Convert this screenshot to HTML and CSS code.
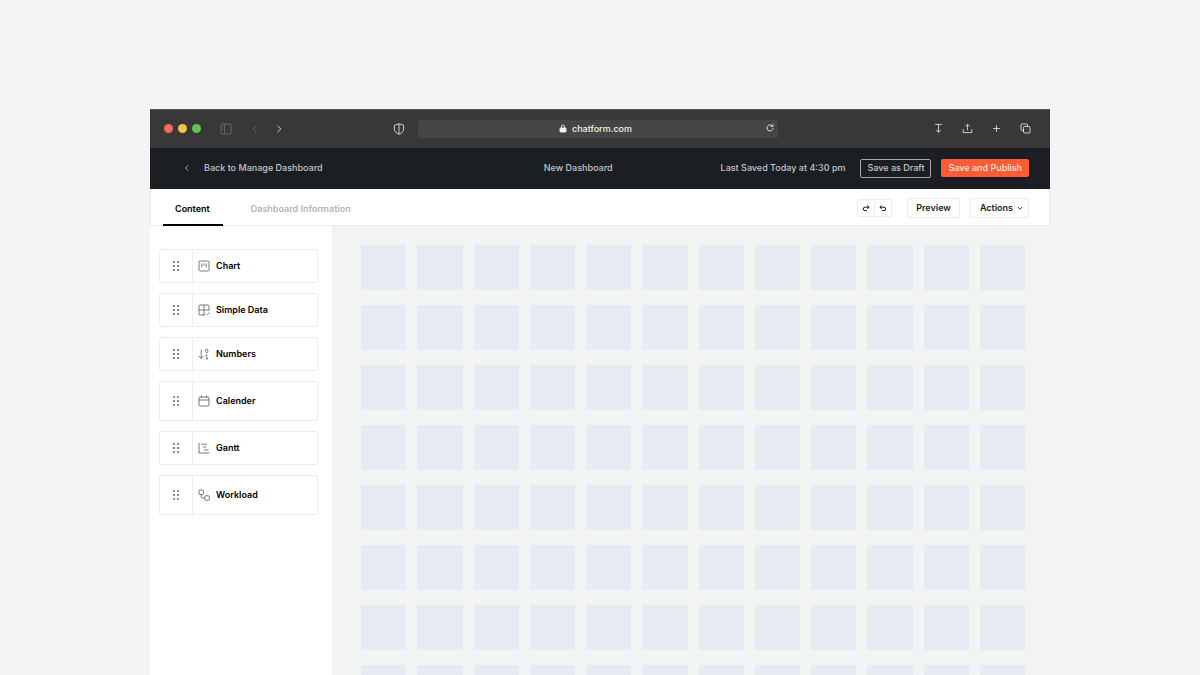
FILE: index.html
```html
<!DOCTYPE html>
<html lang="en">
<head>
  <meta charset="UTF-8" />
  <meta name="viewport" content="width=device-width, initial-scale=1.0" />
  <title>New Dashboard</title>
  <link rel="stylesheet" href="styles.css">
</head>
<body>
  <div class="window">
    <!-- Browser toolbar -->
    <div class="browser-bar">
      <div class="browser-left">
        <div class="lights">
          <span class="light red"></span>
          <span class="light yellow"></span>
          <span class="light green"></span>
        </div>
        <button class="icon-btn dim side-btn" aria-label="Toggle sidebar">
          <svg width="12" height="12" viewBox="0 0 12 12"><rect x="1" y="1" width="10" height="10" rx="1"/><path d="M4.5 1v10M2.4 3.2h.8M2.4 5h.8M2.4 6.8h.8"/></svg>
        </button>
        <button class="icon-btn dim back-btn" aria-label="Back">
          <svg width="10" height="10" viewBox="0 0 10 10"><path d="M6.4 1.8L3.4 5l3 3.2"/></svg>
        </button>
        <button class="icon-btn forward-btn" aria-label="Forward">
          <svg width="10" height="10" viewBox="0 0 10 10"><path d="M3.4 1.6L6.8 5 3.4 8.4"/></svg>
        </button>
        <button class="icon-btn shield-btn" aria-label="Privacy report">
          <svg width="12" height="12" viewBox="0 0 12 12"><path d="M6 .8L10.6 2.2V6c0 2.6-2 4.300-4.600 5.300C3.400 10.300 1.400 8.600 1.400 6V2.200zM6 1v10"/></svg>
        </button>
      </div>
      <div class="address">
        <svg class="lock" width="8" height="9" viewBox="0 0 8 9"><rect x="1" y="4" width="6" height="4" rx=".6"/><path d="M2.400 4V2.800a1.600 1.600 0 0 1 3.200 0V4"/></svg>
        <span>chatform.com</span>
        <button class="icon-btn reload" aria-label="Reload">
          <svg width="10" height="10" viewBox="0 0 10 10"><path d="M8 5.200A3 3 0 1 1 7.300 3M8 1.300V3.400H5.900"/></svg>
        </button>
      </div>
      <div class="browser-right">
        <button class="icon-btn" aria-label="Downloads">
          <svg width="11" height="11" viewBox="0 0 11 11"><path d="M2.200 1.400h6.600M5.500 1.400v7.800M3.200 7l2.300 2.300L7.800 7"/></svg>
        </button>
        <button class="icon-btn" aria-label="Share">
          <svg width="11" height="11" viewBox="0 0 11 11"><path d="M1.200 6.200v3.400h8.600V6.200M5.500 7.300V1.500M3.400 3.400l2.100-2.100 2.100 2.100"/></svg>
        </button>
        <button class="icon-btn" aria-label="New tab">
          <svg width="11" height="11" viewBox="0 0 11 11"><path d="M5.500 2.200v6.600M2.200 5.500h6.600"/></svg>
        </button>
        <button class="icon-btn" aria-label="Show all tabs">
          <svg width="11" height="11" viewBox="0 0 11 11"><rect x="3.500" y="3.500" width="6.500" height="6.500" rx="1"/><path d="M3.500 7.500H2a1 1 0 0 1-1-1V2a1 1 0 0 1 1-1h4.500a1 1 0 0 1 1 1v1.500"/></svg>
        </button>
      </div>
    </div>

    <!-- App header -->
    <header class="app-header">
      <a class="back-link" href="#">
        <svg width="8" height="8" viewBox="0 0 8 8"><path d="M5 1.400L2.600 4 5 6.600"/></svg>
        Back to Manage Dashboard
      </a>
      <h1 class="title">New Dashboard</h1>
      <span class="saved">Last Saved Today at 4:30 pm</span>
      <button class="btn btn-outline">Save as Draft</button>
      <button class="btn btn-primary">Save and Publish</button>
    </header>

    <!-- Tabs and actions -->
    <div class="tab-bar">
      <nav class="tabs">
        <a class="tab active" href="#">Content</a>
        <a class="tab" href="#">Dashboard Information</a>
      </nav>
      <div class="history">
        <button aria-label="Redo">
          <svg width="8" height="8" viewBox="0 0 8 8"><path d="M7 3.200H3a1.700 1.700 0 0 0 0 3.400h2M5.300 1.400L7 3.200 5.300 5"/></svg>
        </button>
        <button aria-label="Undo">
          <svg width="8" height="8" viewBox="0 0 8 8"><path d="M1 3.200h4a1.700 1.700 0 0 1 0 3.400H3M2.700 1.400L1 3.200 2.700 5"/></svg>
        </button>
      </div>
      <button class="btn btn-light">Preview</button>
      <button class="btn btn-light">Actions
        <svg width="6" height="6" viewBox="0 0 6 6"><path d="M.8 2L3 4.200 5.200 2"/></svg>
      </button>
    </div>

    <div class="workspace">
      <aside class="sidebar">
        <div class="widget">
          <span class="handle"></span>
          <svg width="12" height="12" viewBox="0 0 12 12"><rect x="1" y="1" width="10" height="10" rx="1.200"/><path d="M3.800 3.500v3.500M6 3.500v2M8.200 3.500v4"/></svg>
          Chart
        </div>
        <div class="widget">
          <span class="handle"></span>
          <svg width="12" height="12" viewBox="0 0 12 12"><path d="M11 6.500V2a1 1 0 0 0-1-1H2a1 1 0 0 0-1 1v8a1 1 0 0 0 1 1h5M1 6h10M6 1v10M8.300 9.700l1 1 2.200-2.200"/></svg>
          Simple Data
        </div>
        <div class="widget">
          <span class="handle"></span>
          <svg width="12" height="12" viewBox="0 0 12 12"><path d="M3.200 1.500v9M.8 8l2.400 2.500L5.600 8M7.600 7.600l1.200-.8v4M7.600 10.900h2.400"/><rect x="7.600" y="1.200" width="2.200" height="3.400" rx="1"/></svg>
          Numbers
        </div>
        <div class="widget tall">
          <span class="handle"></span>
          <svg width="12" height="12" viewBox="0 0 12 12"><rect x="1" y="2" width="10" height="9" rx="1"/><path d="M1 5h10M3.500.5v2.500M8.500.5v2.500"/></svg>
          Calender
        </div>
        <div class="widget">
          <span class="handle"></span>
          <svg width="12" height="12" viewBox="0 0 12 12"><path d="M1 .8v10.200h10.500M3.500 2.200h5.500M5 5h3.200M6 8h4.500"/></svg>
          Gantt
        </div>
        <div class="widget tall">
          <span class="handle"></span>
          <svg width="12" height="12" viewBox="0 0 12 12"><rect x="1" y="1" width="4.500" height="4.500" rx="1"/><rect x="6.800" y="6.800" width="4.500" height="4.500" rx="1"/><path d="M3.300 5.500V8a1 1 0 0 0 1 1h2.500"/></svg>
          Workload
        </div>
      </aside>
      <main class="canvas" id="canvas"></main>
    </div>
  </div>

  <script>
    // Fill the drop area with empty cells, 12 per row
    const canvas = document.getElementById("canvas");
    const rows = 8;
    for (let i = 0; i < rows * 12; i++) {
      const cell = document.createElement("div");
      cell.className = "cell";
      canvas.appendChild(cell);
    }
  </script>
</body>
</html>
```
FILE: styles.css
```css
:root {
  --page-bg: #f4f4f4;
  --bar-bg: #383839;
  --header-bg: #1b1e23;
  --header-text: #c4c5c7;
  --accent: #ff5c35;
  --line: #ececec;
  --canvas-bg: #f2f4f4;
  --cell-bg: #e6ebf3;
  --icon: #666874;
}

* {
  margin: 0;
  padding: 0;
  box-sizing: border-box;
}

body {
  height: 100vh;
  overflow: hidden;
  background: var(--page-bg);
  font-family: Inter, "Liberation Sans", sans-serif;
  font-size: 9px;
  font-weight: 600;
  line-height: 12px;
}

button {
  font: inherit;
  color: inherit;
  background: none;
  border: none;
  cursor: pointer;
}

a {
  color: inherit;
  text-decoration: none;
}

svg {
  display: block;
  flex: none;
  fill: none;
  stroke: currentColor;
  stroke-width: 0.9;
}

.window {
  display: flex;
  flex-direction: column;
  width: 75%;
  height: 100%;
  margin: 0 auto;
  padding-top: 109px;
}

/* Browser toolbar */
.browser-bar {
  display: grid;
  grid-template-columns: 268fr 360fr 272fr;
  align-items: center;
  height: 39px;
  flex: none;
  padding-bottom: 1px;
  background: var(--bar-bg);
  border-top: 1px solid #555;
  color: #dcdcdc;
}

.browser-left,
.browser-right,
.lights {
  display: flex;
  align-items: center;
}

.browser-left {
  padding: 0 13px 0 14px;
}

.lights {
  gap: 5px;
}

.light {
  width: 9px;
  height: 9px;
  border-radius: 50%;
}

.red { background: #ed6a5f; }
.yellow { background: #f5bf4f; }
.green { background: #61c454; }

.dim { color: #6c6c6d; }
.side-btn { margin-left: 19px; }
.back-btn { margin-left: 18px; }
.forward-btn { margin-left: 14px; }
.shield-btn { margin-left: auto; }

.address {
  display: flex;
  align-items: center;
  justify-content: center;
  gap: 5px;
  position: relative;
  height: 18px;
  padding-right: 5px;
  border-radius: 2px;
  background: #454546;
  color: #f2f2f2;
  font-weight: 500;
}

.lock rect {
  fill: currentColor;
}

.reload {
  position: absolute;
  right: 3px;
  top: 3px;
}

.browser-right {
  justify-content: flex-end;
  gap: 18px;
  padding-right: 19px;
}

/* App header */
.app-header {
  display: flex;
  align-items: center;
  height: 41px;
  flex: none;
  padding: 0 21px 1px 33px;
  background: var(--header-bg);
  color: var(--header-text);
  font-weight: 500;
}

.back-link {
  display: flex;
  align-items: center;
  gap: 13px;
}

.title {
  margin: 0 108px 0 auto;
  font-size: inherit;
  font-weight: inherit;
}

.saved {
  margin-right: 15px;
}

.btn {
  display: flex;
  align-items: center;
  justify-content: center;
  gap: 4px;
  border-radius: 2px;
  white-space: nowrap;
}

.btn-outline {
  height: 19px;
  margin-right: 10px;
  padding: 0 6px;
  border: 1px solid #a5a6a8;
}

.btn-primary {
  height: 18px;
  padding: 0 7px;
  background: var(--accent);
  color: #ffe9e2;
}

/* Tabs */
.tab-bar {
  display: flex;
  align-items: center;
  height: 37px;
  flex: none;
  padding: 2px 20px 0 12px;
  background: #fff;
  border: 1px solid var(--line);
  border-top: none;
}

.tabs {
  display: flex;
  align-self: stretch;
  gap: 16px;
  margin: 0 auto -1px 0;
}

.tab {
  padding: 12px 13px 0 12px;
  color: #b3b4b7;
}

.tab.active {
  color: #000;
  border-bottom: 2px solid #000;
}

.history {
  display: flex;
  margin-right: 15px;
  border: 1px solid var(--line);
  border-radius: 2px;
}

.history button {
  width: 16px;
  height: 16px;
  padding: 0 4px;
}

.history button + button {
  width: 17px;
  border-left: 1px solid var(--line);
}

.btn-light {
  height: 20px;
  padding: 0 8px;
  border: 1px solid var(--line);
  color: #222;
}

.btn-light + .btn-light {
  margin-left: 10px;
}

.btn-light:last-child {
  padding: 0 5px 0 9px;
}

/* Workspace */
.workspace {
  display: flex;
  flex: 1;
  min-height: 0;
}

.sidebar {
  display: flex;
  flex-direction: column;
  gap: 10px;
  flex: none;
  width: 182px;
  padding: 23px 14px 0 9px;
  background: #fff;
}

.widget {
  display: flex;
  align-items: center;
  height: 34px;
  border: 1px solid var(--line);
  border-radius: 2px;
  color: #000;
}

.widget.tall {
  height: 40px;
}

.widget svg {
  margin: 0 6px 0 5px;
  color: var(--icon);
}

/* Drag handle: two columns of three dots */
.handle {
  display: flex;
  align-items: center;
  justify-content: center;
  align-self: stretch;
  width: 33px;
  border-right: 1px solid var(--line);
  cursor: grab;
}

.handle::before {
  content: "";
  width: 8px;
  height: 12px;
  background: radial-gradient(circle, #555 0.5px, transparent 1.2px) 0 0 / 4px 4px;
}

.canvas {
  display: grid;
  grid-template-columns: repeat(12, 1fr);
  grid-auto-rows: 45px;
  gap: 15px 11px;
  flex: 1;
  padding: 19px 25px 0 29px;
  background: var(--canvas-bg);
  overflow: hidden;
}

.cell {
  background: var(--cell-bg);
}
```
